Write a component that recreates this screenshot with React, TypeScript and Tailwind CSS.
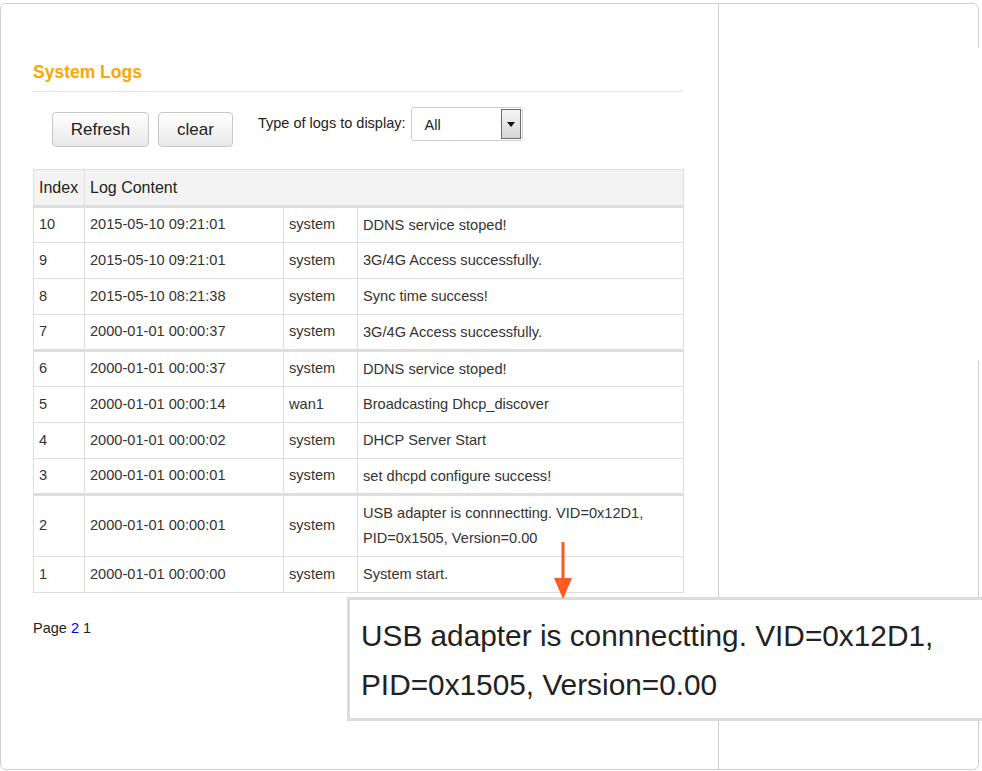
import React from "react";

interface LogRow {
  index: number;
  time: string;
  source: string;
  content: string[];
  thick?: boolean;
}

const logs: LogRow[] = [
  { index: 10, time: "2015-05-10 09:21:01", source: "system", content: ["DDNS service stoped!"] },
  { index: 9, time: "2015-05-10 09:21:01", source: "system", content: ["3G/4G Access successfully."] },
  { index: 8, time: "2015-05-10 08:21:38", source: "system", content: ["Sync time success!"] },
  { index: 7, time: "2000-01-01 00:00:37", source: "system", content: ["3G/4G Access successfully."] },
  { index: 6, time: "2000-01-01 00:00:37", source: "system", content: ["DDNS service stoped!"], thick: true },
  { index: 5, time: "2000-01-01 00:00:14", source: "wan1", content: ["Broadcasting Dhcp_discover"] },
  { index: 4, time: "2000-01-01 00:00:02", source: "system", content: ["DHCP Server Start"] },
  { index: 3, time: "2000-01-01 00:00:01", source: "system", content: ["set dhcpd configure success!"] },
  {
    index: 2,
    time: "2000-01-01 00:00:01",
    source: "system",
    content: ["USB adapter is connnectting. VID=0x12D1,", "PID=0x1505, Version=0.00"],
    thick: true,
  },
  { index: 1, time: "2000-01-01 00:00:00", source: "system", content: ["System start."] },
];

export default function App() {
  return (
    <div
      className="relative w-[982px] h-[771px] overflow-hidden bg-white pt-[3px] text-[#333]"
      style={{ fontFamily: '"Liberation Sans", Arial, sans-serif' }}
    >
      {/* Frame */}
      <div className="relative flex h-[767px] w-[979px] rounded-md border border-[#cfcfcf]">
        {/* Main column */}
        <div className="w-[717px] pl-[32px] pt-[58px]">
          <div className="w-[650px] border-b border-[#e3e3e3] pb-[9px]">
            <h2 className="text-[17.5px] font-bold leading-[20px] text-[#ffa600]">System Logs</h2>
          </div>

          {/* Toolbar */}
          <div className="mt-[15px] flex items-start">
            <button className="mt-[5px] ml-[19px] h-[35px] w-[97px] rounded-[4px] border border-[#c8c8c8] bg-gradient-to-b from-white to-[#e9e9e9] text-[17px] text-[#222]">
              Refresh
            </button>
            <button className="mt-[5px] ml-[9px] h-[35px] w-[75px] rounded-[4px] border border-[#c8c8c8] bg-gradient-to-b from-white to-[#e9e9e9] text-[17px] text-[#222]">
              clear
            </button>
            <span className="mt-[8px] ml-[25px] text-[14.5px] leading-[16px] text-[#222]">
              Type of logs to display:
            </span>
            <div className="ml-[5px] flex h-[34px] w-[112px] items-stretch rounded-[3px] border border-[#cdcdcd] bg-white">
              <span className="flex-1 pl-[13px] pt-[9px] text-[14.5px] leading-[16px] text-[#222]">All</span>
              <div className="my-[1px] mr-[1px] flex w-[20px] items-center justify-center border border-[#6a6a6a] bg-gradient-to-b from-[#f6f6f6] to-[#d6d6d6]">
                <svg width="8" height="5" viewBox="0 0 8 5">
                  <path d="M0 0h8L4 5z" fill="#111" />
                </svg>
              </div>
            </div>
          </div>

          {/* Table */}
          <table className="mt-[22px] w-[650px] table-fixed border-collapse text-[14.6px]">
            <colgroup>
              <col className="w-[51px]" />
              <col className="w-[199px]" />
              <col className="w-[74px]" />
              <col className="w-[326px]" />
            </colgroup>
            <thead>
              <tr className="h-[37px] bg-[#f3f3f3]">
                <th className="border border-b-[3px] border-[#dedede] pl-[5px] text-left text-[16px] font-normal text-[#222]">
                  Index
                </th>
                <th
                  colSpan={3}
                  className="border border-b-[3px] border-[#dedede] pl-[5px] text-left text-[16px] font-normal text-[#222]"
                >
                  Log Content
                </th>
              </tr>
            </thead>
            <tbody>
              {logs.map((log) => (
                <tr key={log.index} className={log.content.length > 1 ? "h-[62px]" : "h-[36px]"}>
                  <td className={`border border-[#dedede] pl-[5px] ${log.thick ? "border-t-[3px]" : ""}`}>
                    {log.index}
                  </td>
                  <td className={`border border-[#dedede] pl-[5px] ${log.thick ? "border-t-[3px]" : ""}`}>
                    {log.time}
                  </td>
                  <td className={`border border-[#dedede] pl-[5px] ${log.thick ? "border-t-[3px]" : ""}`}>
                    {log.source}
                  </td>
                  <td
                    className={`border border-[#dedede] pl-[5px] leading-[25px] ${log.thick ? "border-t-[3px]" : ""}`}
                  >
                    {log.content.map((line) => (
                      <div key={line}>{line}</div>
                    ))}
                  </td>
                </tr>
              ))}
            </tbody>
          </table>

          <div className="mt-[27px] text-[14.5px] leading-[16px] text-[#222]">
            Page <span className="text-[#0000ee]">2</span> 1
          </div>
        </div>

        {/* Right column */}
        <div className="flex-1 border-l border-[#cfcfcf]" />

        {/* gap in the frame's right edge */}
        <div className="absolute right-[-1px] top-[44px] h-[313px] w-[2px] bg-white" />
      </div>

      {/* Zoomed callout */}
      <div className="absolute left-[347px] top-[597px] h-[124px] w-[700px] border-[3px] border-[#dcdcdc] bg-white pl-[11px] pt-[11px] text-[29.8px] leading-[49px] text-[#222]">
        <div>USB adapter is connnectting. VID=0x12D1,</div>
        <div>PID=0x1505, Version=0.00</div>
      </div>

      {/* Arrow */}
      <svg className="absolute left-[552px] top-[542px]" width="22" height="58" viewBox="0 0 22 58">
        <rect x="9.5" y="0" width="3" height="40" fill="#ff5a1f" />
        <path d="M2 36h18L11 57z" fill="#ff5a1f" />
      </svg>
    </div>
  );
}
